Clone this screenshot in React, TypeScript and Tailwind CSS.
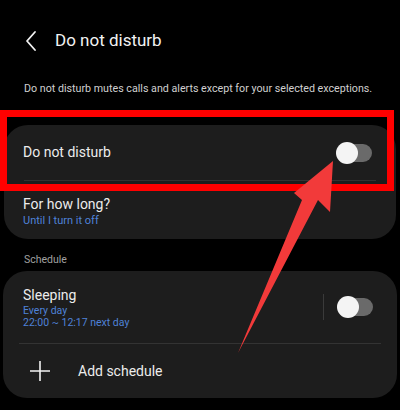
import React from "react";

function Toggle() {
  return (
    <div className="relative w-[36px] h-[18px]">
      <div className="absolute inset-y-0 left-[2px] right-0 rounded-full bg-[#6a6a6a]" />
      <div className="absolute left-0 top-[-2px] w-[22px] h-[22px] rounded-full bg-[#f4f4f4]" />
    </div>
  );
}

export default function App() {
  return (
    <div
      className="relative w-[400px] h-[410px] bg-black text-white overflow-hidden"
      style={{ fontFamily: "Roboto, 'Noto Sans', sans-serif" }}
    >
      {/* header */}
      <div className="flex items-center h-[32px] mt-[25px] pl-[24px]">
        <svg width="14" height="22" viewBox="0 0 14 22" fill="none">
          <path d="M11 2 L3 11 L11 20" stroke="#f2f2f2" strokeWidth="1.8" strokeLinecap="round" strokeLinejoin="round" />
        </svg>
        <span className="ml-[17px] text-[17px] text-[#f2f2f2]">Do not disturb</span>
      </div>

      <p className="mt-[24px] pl-[24px] text-[10.7px] leading-[16px] text-[#d0d0d0]">
        Do not disturb mutes calls and alerts except for your selected exceptions.
      </p>

      {/* main card */}
      <div className="mt-[28px] mx-[4px] rounded-[24px] bg-[#1d1d1d]">
        <div className="flex items-center justify-between h-[55px] pl-[19px] pr-[24px]">
          <span className="text-[14px] text-[#ececec]">Do not disturb</span>
          <Toggle />
        </div>
        <div className="mx-[20px] h-px bg-[#333333]" />
        <div className="flex flex-col justify-center h-[58px] pl-[19px] pt-[2px]">
          <span className="text-[14px] leading-[19px] text-[#ececec]">For how long?</span>
          <span className="text-[11px] leading-[14px] text-[#4f82d8]">Until I turn it off</span>
        </div>
      </div>

      <div className="mt-[14px] pl-[24px] text-[10.5px] leading-[14px] text-[#a0a0a0]">Schedule</div>

      {/* schedule card */}
      <div className="mt-[4px] mx-[3px] rounded-[24px] bg-[#1d1d1d]">
        <div className="flex items-center h-[72px] pl-[20px] pr-[24px]">
          <div className="flex flex-col self-start pt-[14px] flex-1">
            <span className="text-[14px] leading-[20px] text-[#ececec]">Sleeping</span>
            <span className="text-[10.5px] leading-[12px] text-[#4f82d8]">Every day</span>
            <span className="text-[10.5px] leading-[12px] text-[#4f82d8]">22:00 ~ 12:17 next day</span>
          </div>
          <div className="w-px h-[26px] bg-[#3a3a3a] mr-[13px]" />
          <Toggle />
        </div>
        <div className="mx-[16px] h-px bg-[#333333]" />
        <div className="flex items-center h-[54px] pl-[26px]">
          <svg width="22" height="22" viewBox="0 0 22 22">
            <path d="M11 1 V21 M1 11 H21" stroke="#f2f2f2" strokeWidth="1.6" />
          </svg>
          <span className="ml-[27px] text-[14px] text-[#ececec]">Add schedule</span>
        </div>
      </div>

      {/* annotation overlay */}
      <svg className="absolute inset-0 pointer-events-none" width="400" height="410" viewBox="0 0 400 410">
        <rect x="3.5" y="113.5" width="387" height="74" fill="none" stroke="#ff0000" strokeWidth="7" />
        <polygon
          points="333,161 330,212 318,200 238,353 302,200 294,193"
          fill="#f23a3a"
        />
      </svg>
    </div>
  );
}
